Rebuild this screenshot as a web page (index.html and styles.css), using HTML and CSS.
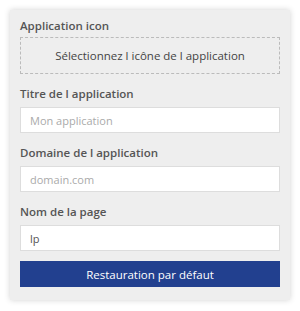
FILE: index.html
```html
<!DOCTYPE html>
<html lang="fr">
<head>
    <meta charset="UTF-8">
    <meta name="viewport" content="width=device-width, initial-scale=1.0">
    <title>Paramètres de l application</title>
    <link rel="stylesheet" href="styles.css">
</head>
<body>

<div class="panel">
    <label class="field-label">Application icon</label>
    <div class="icon-drop">Sélectionnez l icône de l application</div>

    <label class="field-label" for="title">Titre de l application</label>
    <input type="text" id="title" placeholder="Mon application">

    <label class="field-label" for="domain">Domaine de l application</label>
    <input type="text" id="domain" placeholder="domain.com">

    <label class="field-label" for="page">Nom de la page</label>
    <input type="text" id="page" value="lp">

    <button class="reset-btn">Restauration par défaut</button>
</div>

</body>
</html>
```

FILE: styles.css
```css
body {
    font-family: "Open Sans", Arial, sans-serif;
    margin: 0;
    background: #fff;
}

.panel {
    width: 260px;
    height: 283px;
    margin: 10px;
    padding: 7px 10px 0;
    background: #eeeeee;
    box-shadow: 0px 0px 6px rgba(0, 0, 0, 0.18);
    display: flex;
    flex-direction: column;
}

.field-label {
    display: block;
    font-size: 11.5px;
    font-weight: 600;
    line-height: 18px;
    color: #555;
    margin-bottom: 4px;
}

.icon-drop {
    height: 35px;
    border: 1px dashed #bbb;
    display: flex;
    align-items: center;
    justify-content: center;
    font-size: 11.5px;
    color: #444;
    margin-top: -2px;
    margin-bottom: 11px;
}

input {
    box-sizing: border-box;
    width: 100%;
    height: 26px;
    padding: 0 9px;
    border: 1px solid #ddd;
    background: #fff;
    font-family: inherit;
    font-size: 11px;
    color: #555;
    margin: 0 0 11px;
    outline: none;
}

input::placeholder {
    color: #aaa;
}

.reset-btn {
    height: 26px;
    margin-top: -1px;
    border: none;
    background: #22408f;
    color: white;
    font-family: inherit;
    font-size: 11.5px;
    cursor: pointer;
}
```
